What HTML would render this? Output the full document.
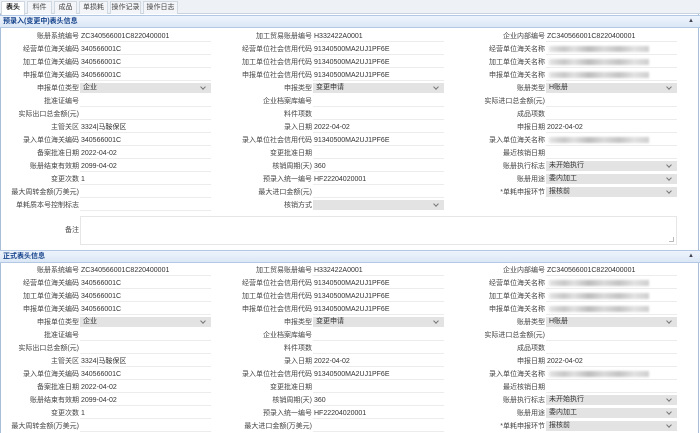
<!DOCTYPE html>
<html><head><meta charset="utf-8"><style>
*{margin:0;padding:0;box-sizing:border-box}
body{width:700px;height:433px;overflow:hidden;background:#fff;font-family:"Liberation Sans","Noto Sans CJK SC",sans-serif;font-size:7px;color:#333;position:relative}
.tabs{position:absolute;left:0;top:0;width:700px;height:14px;background:#eef1f5;border-bottom:1px solid #c8d3e0}
.tab{position:absolute;top:1px;height:13px;line-height:12px;text-align:center;background:#f3f5f8;border:1px solid #d0d8e2;border-bottom:none;color:#444}
.tab.act{background:#fff;font-weight:bold;color:#222;height:14px}
.frame{position:absolute;left:0;top:14px;width:699px;height:419px;border-left:1px solid #a9bfd9;border-right:1px solid #a9bfd9}
.hd{position:absolute;left:0;width:700px;height:13px;background:linear-gradient(#eef4fc,#dbe7f6);border-top:1px solid #b3c8e4;border-bottom:1px solid #b3c8e4;color:#15428b;font-weight:bold;line-height:11px;padding-left:3px}
.hd .c{position:absolute;right:6px;top:0;font-size:6px;color:#445}
.sec{position:absolute;left:0;width:700px}
.row{height:13px;position:relative}
.cell{position:absolute;top:0;width:233px;height:13px}
.lb{position:absolute;left:0;width:80px;text-align:right;line-height:13px;white-space:nowrap;padding-right:1px;color:#444}
.v{position:absolute;left:80px;width:131px;height:12px;line-height:13px;border-bottom:1px solid #ececec;white-space:nowrap;overflow:hidden;padding-left:1px}
.sel{position:absolute;left:80px;width:131px;height:10px;top:1px;background:#e3e3e3;line-height:10px;padding-left:3px}
.sel:after{content:"";position:absolute;right:6px;top:2px;width:3px;height:3px;border-right:1px solid #777;border-bottom:1px solid #777;transform:rotate(45deg)}
.blur{position:absolute;left:83px;top:3px;width:100px;height:6px;background:linear-gradient(90deg,#e6e6e6,#c8c8c8 15%,#e0e0e0 25%,#bdbdbd 40%,#dadada 55%,#c4c4c4 70%,#e2e2e2 85%,#cfcfcf);filter:blur(1px)}
.c1{left:0}.c2{left:233px}.c3{left:466px}
.ta{position:absolute;left:80px;width:597px;height:29px;border:1px solid #e6e6e6}
.ta:after{content:"";position:absolute;right:2px;bottom:2px;width:4px;height:4px;border-right:1px solid #bbb;border-bottom:1px solid #bbb}
</style></head><body>
<div class="tabs">
<div class="tab act" style="left:1px;width:24px">表头</div>
<div class="tab" style="left:27px;width:25px">料件</div>
<div class="tab" style="left:54px;width:23px">成品</div>
<div class="tab" style="left:79px;width:29px">单损耗</div>
<div class="tab" style="left:110px;width:31px">操作记录</div>
<div class="tab" style="left:143px;width:35px">操作日志</div>
</div>
<div class="frame"></div>
<div class="hd" style="top:15px">预录入(变更中)表头信息<span class="c">▲</span></div>

<div class="sec" style="top:30px">
<div class="row"><div class="cell c1"><div class="lb">账册系统编号</div><div class="v">ZC340566001C8220400001</div></div><div class="cell c2"><div class="lb">加工贸易账册编号</div><div class="v">H332422A0001</div></div><div class="cell c3"><div class="lb">企业内部编号</div><div class="v">ZC340566001C8220400001</div></div></div>
<div class="row"><div class="cell c1"><div class="lb">经营单位海关编码</div><div class="v">340566001C</div></div><div class="cell c2"><div class="lb">经营单位社会信用代码</div><div class="v">91340500MA2UJ1PF6E</div></div><div class="cell c3"><div class="lb">经营单位海关名称</div><div class="v"></div><div class="blur"></div></div></div>
<div class="row"><div class="cell c1"><div class="lb">加工单位海关编码</div><div class="v">340566001C</div></div><div class="cell c2"><div class="lb">加工单位社会信用代码</div><div class="v">91340500MA2UJ1PF6E</div></div><div class="cell c3"><div class="lb">加工单位海关名称</div><div class="v"></div><div class="blur"></div></div></div>
<div class="row"><div class="cell c1"><div class="lb">申报单位海关编码</div><div class="v">340566001C</div></div><div class="cell c2"><div class="lb">申报单位社会信用代码</div><div class="v">91340500MA2UJ1PF6E</div></div><div class="cell c3"><div class="lb">申报单位海关名称</div><div class="v"></div><div class="blur"></div></div></div>
<div class="row"><div class="cell c1"><div class="lb">申报单位类型</div><div class="sel">企业</div></div><div class="cell c2"><div class="lb">申报类型</div><div class="sel">变更申请</div></div><div class="cell c3"><div class="lb">账册类型</div><div class="sel">H账册</div></div></div>
<div class="row"><div class="cell c1"><div class="lb">批准证编号</div><div class="v"></div></div><div class="cell c2"><div class="lb">企业档案库编号</div><div class="v"></div></div><div class="cell c3"><div class="lb">实际进口总金额(元)</div><div class="v"></div></div></div>
<div class="row"><div class="cell c1"><div class="lb">实际出口总金额(元)</div><div class="v"></div></div><div class="cell c2"><div class="lb">料件项数</div><div class="v"></div></div><div class="cell c3"><div class="lb">成品项数</div><div class="v"></div></div></div>
<div class="row"><div class="cell c1"><div class="lb">主管关区</div><div class="v">3324|马鞍保区</div></div><div class="cell c2"><div class="lb">录入日期</div><div class="v">2022-04-02</div></div><div class="cell c3"><div class="lb">申报日期</div><div class="v">2022-04-02</div></div></div>
<div class="row"><div class="cell c1"><div class="lb">录入单位海关编码</div><div class="v">340566001C</div></div><div class="cell c2"><div class="lb">录入单位社会信用代码</div><div class="v">91340500MA2UJ1PF6E</div></div><div class="cell c3"><div class="lb">录入单位海关名称</div><div class="v"></div><div class="blur"></div></div></div>
<div class="row"><div class="cell c1"><div class="lb">备案批准日期</div><div class="v">2022-04-02</div></div><div class="cell c2"><div class="lb">变更批准日期</div><div class="v"></div></div><div class="cell c3"><div class="lb">最近核销日期</div><div class="v"></div></div></div>
<div class="row"><div class="cell c1"><div class="lb">账册结束有效期</div><div class="v">2099-04-02</div></div><div class="cell c2"><div class="lb">核销周期(天)</div><div class="v">360</div></div><div class="cell c3"><div class="lb">账册执行标志</div><div class="sel">未开始执行</div></div></div>
<div class="row"><div class="cell c1"><div class="lb">变更次数</div><div class="v">1</div></div><div class="cell c2"><div class="lb">预录入统一编号</div><div class="v">HF22204020001</div></div><div class="cell c3"><div class="lb">账册用途</div><div class="sel">委内加工</div></div></div>
<div class="row"><div class="cell c1"><div class="lb">最大周转金额(万美元)</div><div class="v"></div></div><div class="cell c2"><div class="lb">最大进口金额(元)</div><div class="v"></div></div><div class="cell c3"><div class="lb">*单耗申报环节</div><div class="sel">报核前</div></div></div>
<div class="row"><div class="cell c1"><div class="lb">单耗质本号控制标志</div><div class="v"></div></div><div class="cell c2"><div class="lb">核销方式</div><div class="sel"></div></div></div>
<div class="row" style="height:30px;margin-top:4px"><div class="lb" style="line-height:30px">备注</div><div class="ta"></div></div>
</div>

<div class="hd" style="top:250px">正式表头信息<span class="c">▲</span></div>

<div class="sec" style="top:264px">
<div class="row"><div class="cell c1"><div class="lb">账册系统编号</div><div class="v">ZC340566001C8220400001</div></div><div class="cell c2"><div class="lb">加工贸易账册编号</div><div class="v">H332422A0001</div></div><div class="cell c3"><div class="lb">企业内部编号</div><div class="v">ZC340566001C8220400001</div></div></div>
<div class="row"><div class="cell c1"><div class="lb">经营单位海关编码</div><div class="v">340566001C</div></div><div class="cell c2"><div class="lb">经营单位社会信用代码</div><div class="v">91340500MA2UJ1PF6E</div></div><div class="cell c3"><div class="lb">经营单位海关名称</div><div class="v"></div><div class="blur"></div></div></div>
<div class="row"><div class="cell c1"><div class="lb">加工单位海关编码</div><div class="v">340566001C</div></div><div class="cell c2"><div class="lb">加工单位社会信用代码</div><div class="v">91340500MA2UJ1PF6E</div></div><div class="cell c3"><div class="lb">加工单位海关名称</div><div class="v"></div><div class="blur"></div></div></div>
<div class="row"><div class="cell c1"><div class="lb">申报单位海关编码</div><div class="v">340566001C</div></div><div class="cell c2"><div class="lb">申报单位社会信用代码</div><div class="v">91340500MA2UJ1PF6E</div></div><div class="cell c3"><div class="lb">申报单位海关名称</div><div class="v"></div><div class="blur"></div></div></div>
<div class="row"><div class="cell c1"><div class="lb">申报单位类型</div><div class="sel">企业</div></div><div class="cell c2"><div class="lb">申报类型</div><div class="sel">变更申请</div></div><div class="cell c3"><div class="lb">账册类型</div><div class="sel">H账册</div></div></div>
<div class="row"><div class="cell c1"><div class="lb">批准证编号</div><div class="v"></div></div><div class="cell c2"><div class="lb">企业档案库编号</div><div class="v"></div></div><div class="cell c3"><div class="lb">实际进口总金额(元)</div><div class="v"></div></div></div>
<div class="row"><div class="cell c1"><div class="lb">实际出口总金额(元)</div><div class="v"></div></div><div class="cell c2"><div class="lb">料件项数</div><div class="v"></div></div><div class="cell c3"><div class="lb">成品项数</div><div class="v"></div></div></div>
<div class="row"><div class="cell c1"><div class="lb">主管关区</div><div class="v">3324|马鞍保区</div></div><div class="cell c2"><div class="lb">录入日期</div><div class="v">2022-04-02</div></div><div class="cell c3"><div class="lb">申报日期</div><div class="v">2022-04-02</div></div></div>
<div class="row"><div class="cell c1"><div class="lb">录入单位海关编码</div><div class="v">340566001C</div></div><div class="cell c2"><div class="lb">录入单位社会信用代码</div><div class="v">91340500MA2UJ1PF6E</div></div><div class="cell c3"><div class="lb">录入单位海关名称</div><div class="v"></div><div class="blur"></div></div></div>
<div class="row"><div class="cell c1"><div class="lb">备案批准日期</div><div class="v">2022-04-02</div></div><div class="cell c2"><div class="lb">变更批准日期</div><div class="v"></div></div><div class="cell c3"><div class="lb">最近核销日期</div><div class="v"></div></div></div>
<div class="row"><div class="cell c1"><div class="lb">账册结束有效期</div><div class="v">2099-04-02</div></div><div class="cell c2"><div class="lb">核销周期(天)</div><div class="v">360</div></div><div class="cell c3"><div class="lb">账册执行标志</div><div class="sel">未开始执行</div></div></div>
<div class="row"><div class="cell c1"><div class="lb">变更次数</div><div class="v">1</div></div><div class="cell c2"><div class="lb">预录入统一编号</div><div class="v">HF22204020001</div></div><div class="cell c3"><div class="lb">账册用途</div><div class="sel">委内加工</div></div></div>
<div class="row"><div class="cell c1"><div class="lb">最大周转金额(万美元)</div><div class="v"></div></div><div class="cell c2"><div class="lb">最大进口金额(万美元)</div><div class="v"></div></div><div class="cell c3"><div class="lb">*单耗申报环节</div><div class="sel">报核前</div></div></div>
</div>
</body></html>
